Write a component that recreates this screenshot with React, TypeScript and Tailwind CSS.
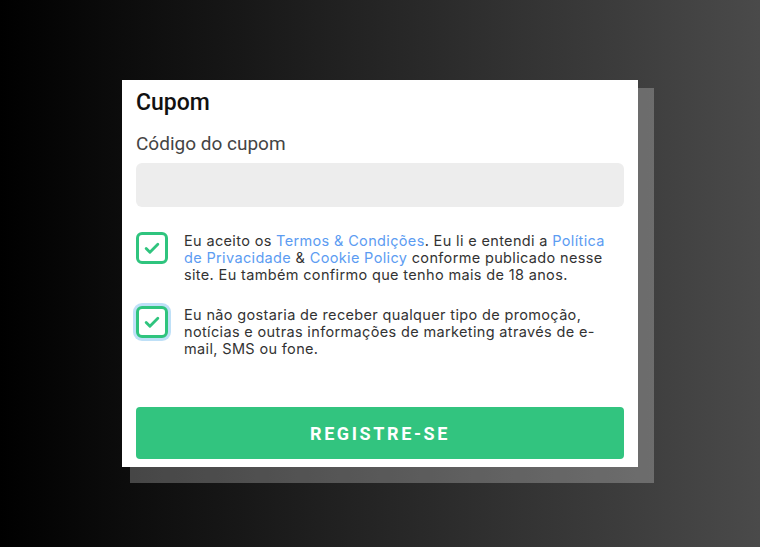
import * as React from "react";

function CheckBox({ focused }: { focused?: boolean }) {
    return (
        <div
            className={
                "flex h-8 w-8 shrink-0 items-center justify-center rounded-[6px] border-[3px] border-[#2fc47e] bg-white" +
                (focused ? " shadow-[0_0_0_3px_#bfe0f7]" : "")
            }
        >
            <svg viewBox="0 0 24 24" className="h-[20px] w-[20px]" fill="none" stroke="#2fc47e" strokeWidth={3.4} strokeLinecap="round" strokeLinejoin="round">
                <path d="M5 12.5l4.5 4.5L19 7.5" />
            </svg>
        </div>
    );
}

function Link({ children }: { children: React.ReactNode }) {
    return <span className="text-[#5c9cf2]">{children}</span>;
}

export default function App() {
    const [code, setCode] = React.useState("");

    return (
        <div className="flex h-[547px] w-[760px] items-center justify-center bg-[linear-gradient(to_right,#000000,#4a4a4a)] font-['Roboto',sans-serif]">
            <div className="flex h-[387px] w-[516px] flex-col bg-white px-[14px] pt-[9px] shadow-[12px_12px_0_4px_rgba(255,255,255,0.24)]">
                <h2 className="text-[23px] font-medium leading-[28px] text-[#111]">Cupom</h2>

                <label className="mt-[16px] text-[19px] leading-[22px] text-[#444]">Código do cupom</label>
                <input
                    value={code}
                    onChange={(e) => setCode(e.target.value)}
                    className="mt-[8px] h-[44px] w-full rounded-[6px] bg-[#ededed] px-3 text-[15px] outline-none"
                />

                <div className="mt-[25px] flex gap-[16px]">
                    <CheckBox />
                    <p className="font-['Inter',sans-serif] text-[14.5px] leading-[17px] tracking-[0.35px] text-[#333]">
                        Eu aceito os <Link>Termos &amp; Condições</Link>. Eu li e entendi a <Link>Política de Privacidade</Link> &amp; <Link>Cookie Policy</Link> conforme publicado nesse site. Eu também confirmo que tenho mais de 18 anos.
                    </p>
                </div>

                <div className="mt-[23px] flex gap-[16px]">
                    <CheckBox focused />
                    <p className="pr-[16px] font-['Inter',sans-serif] text-[14.5px] leading-[17px] tracking-[0.35px] text-[#333]">
                        Eu não gostaria de receber qualquer tipo de promoção, notícias e outras informações de marketing através de e-mail, SMS ou fone.
                    </p>
                </div>

                <button className="mt-auto mb-[8px] h-[52px] w-full rounded-[4px] bg-[#32c47f] text-[18px] font-bold tracking-[2.6px] text-white">
                    REGISTRE-SE
                </button>
            </div>
        </div>
    );
}
